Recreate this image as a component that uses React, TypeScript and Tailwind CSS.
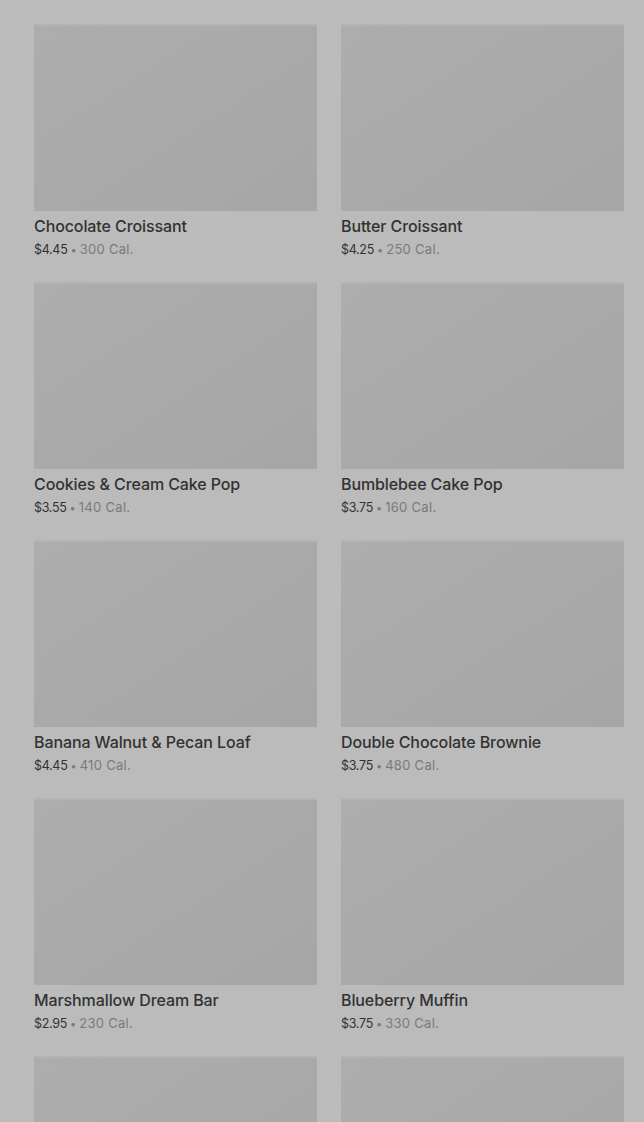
import React from "react";

type Item = { name: string; price: string; cal: string };

const items: Item[] = [
  { name: "Almond Croissant", price: "$4.45", cal: "410 Cal." },
  { name: "Ham & Swiss Croissant", price: "$4.95", cal: "320 Cal." },
  { name: "Chocolate Croissant", price: "$4.45", cal: "300 Cal." },
  { name: "Butter Croissant", price: "$4.25", cal: "250 Cal." },
  { name: "Cookies & Cream Cake Pop", price: "$3.55", cal: "140 Cal." },
  { name: "Bumblebee Cake Pop", price: "$3.75", cal: "160 Cal." },
  { name: "Banana Walnut & Pecan Loaf", price: "$4.45", cal: "410 Cal." },
  { name: "Double Chocolate Brownie", price: "$3.75", cal: "480 Cal." },
  { name: "Marshmallow Dream Bar", price: "$2.95", cal: "230 Cal." },
  { name: "Blueberry Muffin", price: "$3.75", cal: "330 Cal." },
  { name: "Lemon Loaf", price: "$3.95", cal: "470 Cal." },
  { name: "Cheese Danish", price: "$3.95", cal: "290 Cal." },
];

function Card({ item }: { item: Item }) {
  return (
    <div className="flex flex-col">
      <div className="h-[187px] w-full bg-gradient-to-br from-[#adadad] to-[#a6a6a6] border-t-2 border-[#b3b3b3]" />
      <div className="mt-[4px] h-[22px] text-[16px] leading-[22px] font-medium text-[#323232] tracking-[-0.1px]">
        {item.name}
      </div>
      <div className="mt-[3px] h-[18px] overflow-visible flex items-baseline text-[13px] leading-[18px] text-[#7a7a7a]">
        <span className="text-[12.5px] leading-[18px] text-[#323232] tracking-[-0.3px]">{item.price}</span>
        <span className="mx-[3px] text-[11px] leading-[18px]">•</span>
        <span className="leading-[18px] tracking-[0.3px]">{item.cal}</span>
      </div>
    </div>
  );
}

export default function App() {
  return (
    <div
      className="h-[1122px] w-[644px] overflow-hidden bg-[#bbbbbb]"
      style={{ fontFamily: "Inter, 'Noto Sans', sans-serif" }}
    >
      <div className="-mt-[234px] pl-[34px] pr-[20px] grid grid-cols-2 gap-x-[24px] gap-y-[24px]">
        {items.map((it, i) => (
          <Card key={i} item={it} />
        ))}
      </div>
    </div>
  );
}
